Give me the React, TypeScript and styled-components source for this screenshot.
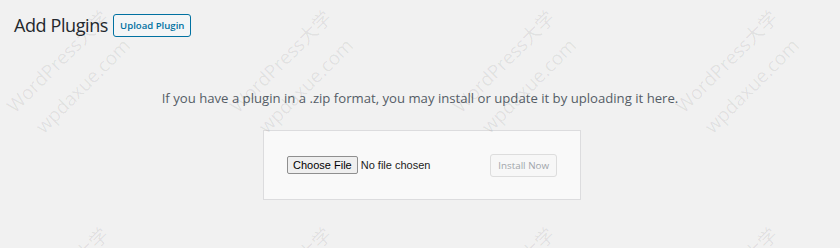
import React from "react";
import styled, { createGlobalStyle } from "styled-components";

const Global = createGlobalStyle`
  html, body { margin: 0; padding: 0; background: #f1f1f1; }
  body { font-family: "Open Sans", "Noto Sans", sans-serif; color: #23282d; }
`;

const Page = styled.div`
  position: relative;
  width: 840px;
  height: 248px;
  overflow: hidden;
  background: #f1f1f1;
`;

const Header = styled.div`
  display: flex;
  align-items: center;
  gap: 5px;
  padding: 14px 0 0 14px;
`;

const Title = styled.h1`
  margin: 0;
  font-size: 18px;
  font-weight: 400;
  line-height: 23px;
  color: #23282d;
  letter-spacing: -0.4px;
`;

const OutlineButton = styled.button`
  height: 23px;
  padding: 0 6px;
  border: 1px solid #0071a1;
  border-radius: 3px;
  background: #f3f5f6;
  color: #0071a1;
  font-family: "Open Sans", "Noto Sans", sans-serif;
  font-size: 9.6px;
  font-weight: 600;
  line-height: 21px;
`;

const Help = styled.p`
  margin: 0;
  padding-top: 51px;
  text-align: center;
  font-size: 13.15px;
  line-height: 20px;
  color: #555d66;
`;

const UploadBox = styled.div`
  box-sizing: border-box;
  width: 318px;
  height: 70px;
  margin: 22px 0 0 263px;
  padding: 0 23px;
  display: flex;
  align-items: center;
  justify-content: space-between;
  background: #f9f9f9;
  border: 1px solid #dcdcde;
`;

const FileField = styled.div`
  display: flex;
  align-items: center;
  gap: 3px;
  font-family: "Liberation Sans", Arial, sans-serif;
  font-size: 11px;
  color: #222;
`;

const FileButton = styled.span`
  box-sizing: border-box;
  height: 18px;
  padding: 0 5px;
  display: inline-flex;
  align-items: center;
  background: #efefef;
  border: 1px solid #8f8f8f;
  border-radius: 2px;
  color: #000;
`;

const DisabledButton = styled.button`
  box-sizing: border-box;
  height: 23px;
  padding: 0 7px;
  border: 1px solid #dddddd;
  border-radius: 3px;
  background: #f7f7f7;
  color: #a0a5aa;
  font-family: "Open Sans", "Noto Sans", sans-serif;
  font-size: 9.8px;
  line-height: 21px;
`;

const Mark = styled.div<{ $x: number; $y: number }>`
  position: absolute;
  left: ${(p) => p.$x}px;
  top: ${(p) => p.$y}px;
  transform: translate(-50%, -50%) rotate(-45deg);
  white-space: nowrap;
  font-family: "Open Sans", "Noto Sans CJK SC", sans-serif;
  font-size: 19px;
  color: rgba(0, 0, 0, 0.07);
  pointer-events: none;
  line-height: 1;
`;

const cols = [0, 1, 2, 3];
const rows = [0, 1];

export default function App() {
  return (
    <Page>
      <Global />
      <Header>
        <Title>Add Plugins</Title>
        <OutlineButton>Upload Plugin</OutlineButton>
      </Header>
      <Help>
        If you have a plugin in a .zip format, you may install or update it by uploading it here.
      </Help>
      <UploadBox>
        <FileField>
          <FileButton>Choose File</FileButton>
          <span>No file chosen</span>
        </FileField>
        <DisabledButton disabled>Install Now</DisabledButton>
      </UploadBox>
      {rows.map((r) =>
        cols.map((c) => (
          <React.Fragment key={`${r}-${c}`}>
            <Mark $x={58 + 223 * c} $y={62 + 217 * r}>
              WordPress大学
            </Mark>
            <Mark $x={83 + 223 * c} $y={86 + 217 * r}>
              wpdaxue.com
            </Mark>
          </React.Fragment>
        ))
      )}
    </Page>
  );
}
